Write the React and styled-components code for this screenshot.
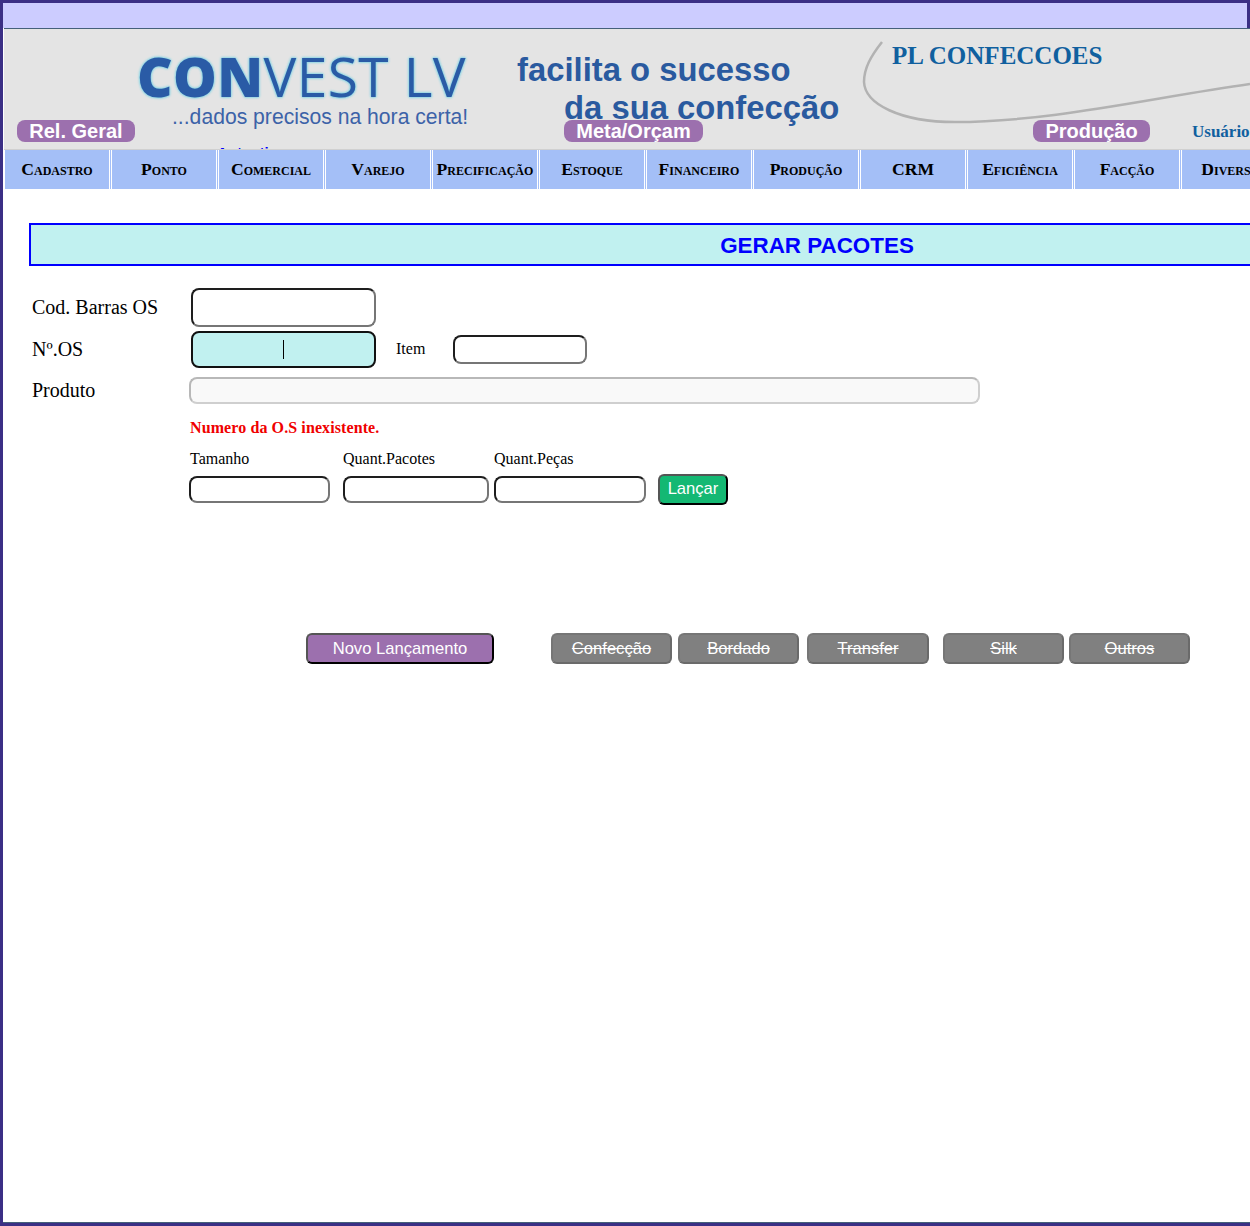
import React from "react";
import styled, { createGlobalStyle } from "styled-components";

const GlobalStyle = createGlobalStyle`
  html, body {
    margin: 0;
    padding: 0;
    height: 100%;
    overflow: hidden;
    background: #fff;
  }
`;

const Frame = styled.div`
  box-sizing: border-box;
  width: 1250px;
  height: 1226px;
  border-style: solid;
  border-color: #3b2f85;
  border-width: 3px 0 3px 3px;
  box-shadow: inset 0 -1px 0 #45607a;
  font-family: "Liberation Serif", serif;
  color: #000;
`;

const TopBar = styled.div`
  height: 25px;
  margin-right: 3px;
  background: #ccccff;
  box-shadow: 3px 0 0 #3b2f85;
`;

const Banner = styled.header`
  position: relative;
  box-sizing: border-box;
  width: 1300px;
  height: 122px;
  margin-left: 1px;
  border-top: 1px solid #45607a;
  border-bottom: 1px solid #d0d0d0;
  background: #e4e4e4;
  overflow: hidden;
`;

const Curve = styled.svg`
  position: absolute;
  left: 0;
  top: 0;
`;

const BannerArt = styled.div`
  display: flex;
  height: 90px;
  padding-left: 133px;
`;

const Logo = styled.div`
  flex: none;
  width: 380px;
  padding-top: 11px;
`;

const LogoMark = styled.div`
  font-family: "Open Sans", sans-serif;
  font-size: 55px;
  line-height: 72px;
  height: 64px;
  letter-spacing: 0.4px;
  color: #2a5ba6;
  text-shadow: 0 0 3px #8fd6e4, 0 0 3px #8fd6e4, 0 0 2px #8fd6e4, 0 0 1px #8fd6e4;
  white-space: nowrap;

  b {
    font-weight: 800;
  }
`;

const LogoSlogan = styled.div`
  margin-left: 35px;
  font-family: "Liberation Sans", sans-serif;
  font-size: 21.15px;
  line-height: 26px;
  color: #3c62a8;
  white-space: nowrap;
`;

const Tagline = styled.div`
  flex: none;
  width: 375px;
  padding-top: 22px;
  font-family: "Liberation Sans", sans-serif;
  font-size: 32.8px;
  font-weight: 700;
  line-height: 38px;
  color: #2a5a9f;
  white-space: nowrap;
`;

const TaglineIndent = styled.div`
  margin-left: 47px;
`;

const Company = styled.div`
  padding-top: 11px;
  font-size: 25px;
  font-weight: 700;
  line-height: 32px;
  color: #10609f;
  white-space: nowrap;
`;

const PillRow = styled.div`
  position: relative;
  display: flex;
  align-items: center;
`;

const Pill = styled.span`
  box-sizing: border-box;
  width: ${(p) => p.$width}px;
  height: 22px;
  margin-left: ${(p) => p.$left}px;
  border-radius: 8px;
  background: #9c70ae;
  color: #fff;
  font-family: "Liberation Sans", sans-serif;
  font-size: 20px;
  font-weight: 700;
  line-height: 22px;
  text-align: center;
`;

const UserLabel = styled.span`
  margin-left: 42px;
  padding-top: 3px;
  font-size: 17px;
  font-weight: 700;
  color: #10609f;
`;

const ClippedLink = styled.span`
  position: absolute;
  left: 213px;
  top: 115px;
  font-family: "Liberation Sans", sans-serif;
  font-size: 15px;
  font-weight: 700;
  color: #0000ff;
`;

const Nav = styled.nav`
  display: flex;
  width: 1300px;
  margin-left: 2px;
`;

const NavItem = styled.a`
  flex: none;
  box-sizing: border-box;
  width: 104px;
  height: 39px;
  margin-right: 3px;
  background: #a4bff7;
  box-shadow: 1px 0 0 #fff, 2px 0 0 #a4bff7;
  font-size: 17.6px;
  font-weight: 700;
  font-variant: small-caps;
  line-height: 39px;
  text-align: center;
  white-space: nowrap;
  color: #000;
`;

const Main = styled.main`
  padding: 34px 0 0 26px;
`;

const TitleBox = styled.h1`
  box-sizing: border-box;
  width: 1576px;
  height: 43px;
  margin: 0 0 22px;
  border: 2px solid #0000ff;
  background: #c1f1f0;
  color: #0000ff;
  font-family: "Liberation Sans", sans-serif;
  font-size: 22.4px;
  font-weight: 700;
  line-height: 41px;
  text-align: center;
`;

const FieldRow = styled.div`
  display: flex;
  align-items: center;
  height: ${(p) => p.$height}px;
  margin-bottom: ${(p) => p.$gap || 0}px;
`;

const FieldLabel = styled.label`
  flex: none;
  width: ${(p) => p.$width}px;
  padding-left: 3px;
  box-sizing: border-box;
  font-size: 20px;
  white-space: nowrap;
`;

const TextInput = styled.input`
  box-sizing: border-box;
  display: block;
  flex: none;
  width: ${(p) => p.$width}px;
  height: ${(p) => p.$height}px;
  margin: 0;
  padding: 0;
  border-width: 2px;
  border-style: solid;
  border-color: #1e1e1e #767676 #767676 #1e1e1e;
  border-radius: 8px;
  background: #fff;
  outline: none;
`;

const FocusedWrap = styled.div`
  position: relative;
  flex: none;
`;

const FocusedInput = styled(TextInput)`
  border-color: #111;
  background: #c1f1f0;
`;

const Caret = styled.span`
  position: absolute;
  left: 92px;
  top: 9px;
  width: 1px;
  height: 19px;
  background: #000;
`;

const SmallLabel = styled.label`
  margin: 0 28px 2px 20px;
  font-size: 16px;
`;

const DisabledInput = styled(TextInput)`
  border-color: #b8b8b8 #cfcfcf #cfcfcf #b8b8b8;
  background: #f9f9f9;
`;

const ErrorText = styled.p`
  margin: 14px 0 0 161px;
  font-size: 16px;
  font-weight: 700;
  line-height: 19px;
  letter-spacing: 0.1px;
  color: #f00000;
`;

const SizeGrid = styled.div`
  display: grid;
  grid-template-columns: 141px 146px 152px auto;
  margin: 12px 0 0 160px;
  justify-content: start;
  align-items: center;
`;

const SizeHead = styled.span`
  font-size: 16px;
  line-height: 20px;
  height: 25px;
  padding-left: ${(p) => p.$pad || 0}px;
  margin-left: ${(p) => p.$left || 0}px;
  white-space: nowrap;
`;

const SizeCell = styled.div`
  margin-left: ${(p) => p.$left || 0}px;
`;

const ActionButton = styled.button`
  box-sizing: border-box;
  display: block;
  flex: none;
  width: ${(p) => p.$width}px;
  height: 31px;
  margin: 0 0 0 ${(p) => p.$left || 0}px;
  padding: 0 0 ${(p) => p.$lift || 0}px;
  border-width: 2px;
  border-style: solid;
  border-color: ${(p) => p.$edge || "#555 #000 #000 #555"};
  border-radius: 6px;
  background: ${(p) => p.$bg};
  color: #fff;
  font-family: "Liberation Sans", sans-serif;
  font-size: 16.6px;
  text-decoration: ${(p) => (p.$struck ? "line-through" : "none")};
`;

const ButtonRow = styled.div`
  display: flex;
  margin: 128px 0 0 277px;
`;

const menu = [
  "Cadastro",
  "Ponto",
  "Comercial",
  "Varejo",
  "Precificação",
  "Estoque",
  "Financeiro",
  "Produção",
  "CRM",
  "Eficiência",
  "Facção",
  "Diversos",
];

const grayEdge = "#767676 #6a6a6a #6a6a6a #767676";

const sectors = [
  { label: "Confecção", width: 121, left: 57 },
  { label: "Bordado", width: 121, left: 6 },
  { label: "Transfer", width: 122, left: 8 },
  { label: "Silk", width: 121, left: 14 },
  { label: "Outros", width: 121, left: 5 },
];

export default function App() {
  return (
    <Frame>
      <GlobalStyle />
      <TopBar />
      <Banner>
        <Curve width="1246" height="120" viewBox="4 29 1246 120">
          <path
            d="M882 42 C871 56 864 68 864 82 C865 104 900 122 955 122 C1050 122 1150 98 1250 84"
            fill="none"
            stroke="#b2b2b2"
            strokeWidth="2.5"
          />
        </Curve>
        <ClippedLink>Autenticar</ClippedLink>
        <BannerArt>
          <Logo>
            <LogoMark>
              <b>CON</b>VEST LV
            </LogoMark>
            <LogoSlogan>...dados precisos na hora certa!</LogoSlogan>
          </Logo>
          <Tagline>
            facilita o sucesso
            <TaglineIndent>da sua confecção</TaglineIndent>
          </Tagline>
          <Company>PL CONFECCOES</Company>
        </BannerArt>
        <PillRow>
          <Pill $width={118} $left={13}>Rel. Geral</Pill>
          <Pill $width={139} $left={429}>Meta/Orçam</Pill>
          <Pill $width={117} $left={330}>Produção</Pill>
          <UserLabel>Usuário</UserLabel>
        </PillRow>
      </Banner>
      <Nav>
        {menu.map((item) => (
          <NavItem key={item}>{item}</NavItem>
        ))}
      </Nav>
      <Main>
        <TitleBox>GERAR PACOTES</TitleBox>
        <FieldRow $height={39} $gap={4}>
          <FieldLabel $width={162}>Cod. Barras OS</FieldLabel>
          <TextInput $width={185} $height={39} />
        </FieldRow>
        <FieldRow $height={37} $gap={9}>
          <FieldLabel $width={162}>Nº.OS</FieldLabel>
          <FocusedWrap>
            <FocusedInput $width={185} $height={37} />
            <Caret />
          </FocusedWrap>
          <SmallLabel>Item</SmallLabel>
          <TextInput $width={134} $height={29} />
        </FieldRow>
        <FieldRow $height={27}>
          <FieldLabel $width={160}>Produto</FieldLabel>
          <DisabledInput $width={791} $height={27} />
        </FieldRow>
        <ErrorText>Numero da O.S inexistente.</ErrorText>
        <SizeGrid>
          <SizeHead $pad={1}>Tamanho</SizeHead>
          <SizeHead $left={13}>Quant.Pacotes</SizeHead>
          <SizeHead $left={18}>Quant.Peças</SizeHead>
          <span />
          <SizeCell>
            <TextInput $width={141} $height={27} />
          </SizeCell>
          <SizeCell $left={13}>
            <TextInput $width={146} $height={27} />
          </SizeCell>
          <SizeCell $left={18}>
            <TextInput $width={152} $height={27} />
          </SizeCell>
          <SizeCell $left={30}>
            <ActionButton $width={70} $bg="#14b873" $lift={2}>Lançar</ActionButton>
          </SizeCell>
        </SizeGrid>
        <ButtonRow>
          <ActionButton $width={188} $bg="#9c70ae">Novo Lançamento</ActionButton>
          {sectors.map((s) => (
            <ActionButton
              key={s.label}
              $width={s.width}
              $left={s.left}
              $bg="#808080"
              $edge={grayEdge}
              $struck
            >
              {s.label}
            </ActionButton>
          ))}
        </ButtonRow>
      </Main>
    </Frame>
  );
}
